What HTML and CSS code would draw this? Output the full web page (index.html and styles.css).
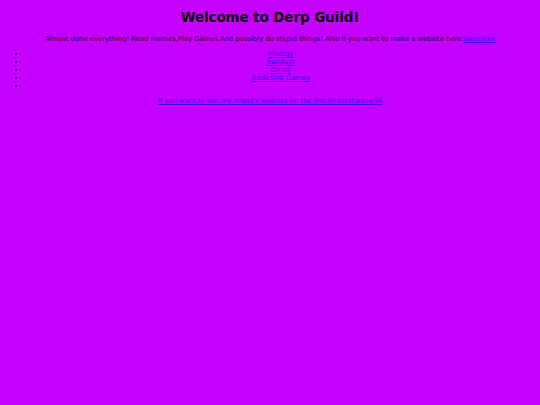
FILE: index.html
```html
<!DOCTYPE html>
<html>
<head>
<meta charset="utf-8">
<link rel="stylesheet" href="styles.css">
</head>
<body>
<h1 class="title">Welcome to Derp Guild!</h1>
<p class="intro">Almost done everything! Read memes,Play Games,And possibly do stupid things! Also if you want to make a website here:<a href="#">Neocities</a></p>
<ul class="links">
<li><a href="#">Prodigy</a></li>
<li><a href="#">Random</a></li>
<li><a href="#">Gmail</a></li>
<li><a href="#">Addicting Games</a></li>
<li></li>
</ul>
<p class="friend"><a href="#">If you want to see my friend's website on the link:Endershadow96</a></p>
</body>
</html>
```
FILE: styles.css
```css
html, body {
  background: #c400ff;
}
body {
  margin: 0;
  padding: 5px;
  font-family: "DejaVu Sans", Verdana, sans-serif;
  font-size: 6.8px;
  color: #1a0026;
}
a {
  color: #3a10f0;
}
.title {
  text-align: center;
  font-size: 13.33px;
  color: #000;
  margin: 5px 0 9px;
  line-height: 16px;
}
.intro {
  text-align: center;
  margin: 0 0 7px;
  line-height: 8px;
}
.links {
  margin: 0 0 7px;
  padding-left: 21px;
  line-height: 8px;
  list-style: disc;
}
.links li {
  text-align: center;
  height: 8px;
}
.friend {
  text-align: center;
  margin: 0;
  line-height: 8px;
}
```
